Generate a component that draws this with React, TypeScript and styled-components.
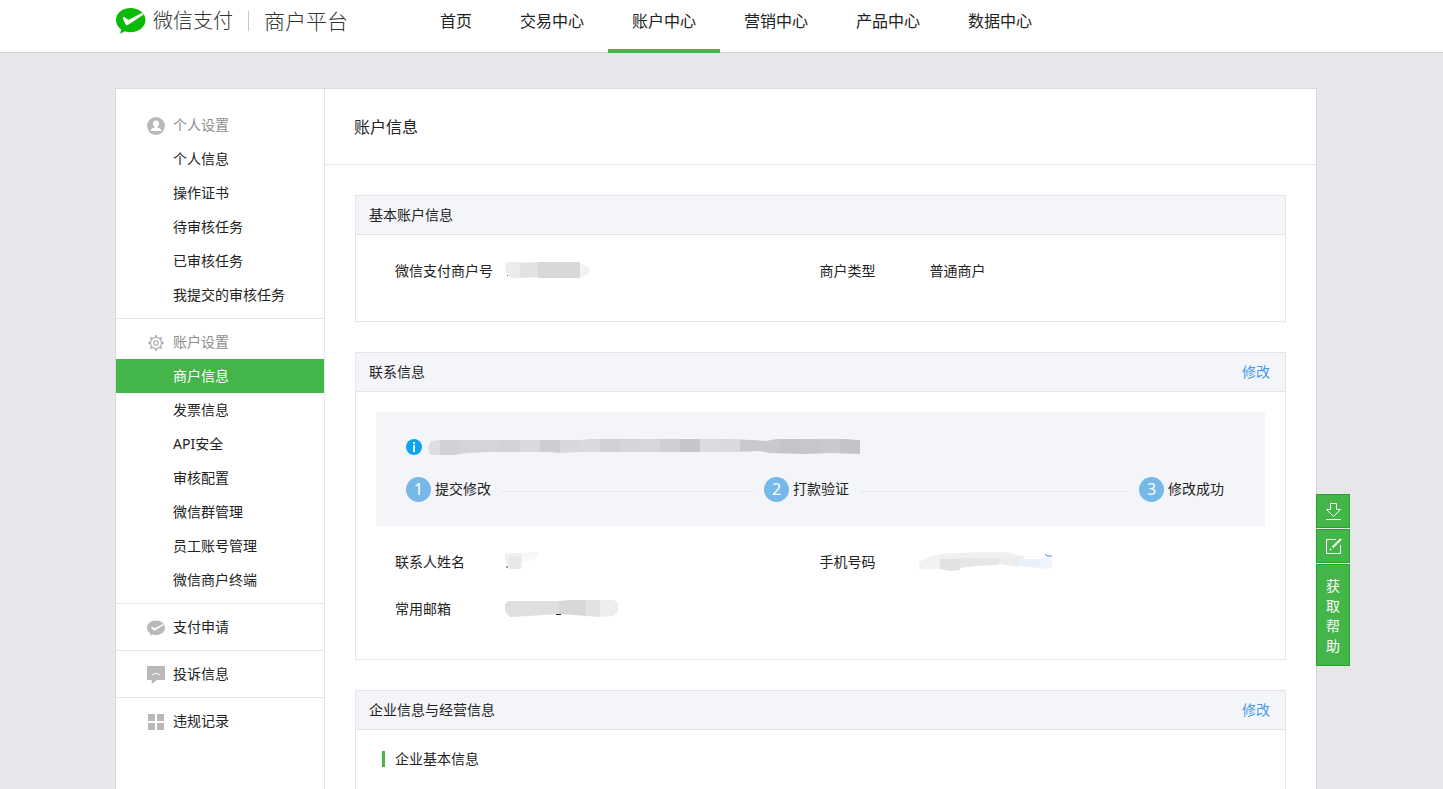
import React, { useState } from 'react';
import styled, { createGlobalStyle } from 'styled-components';

const GlobalStyle = createGlobalStyle`
  * { box-sizing: border-box; }
  body {
    margin: 0;
    background: #e7e7eb;
    color: #222;
    font: 14px/20px "Noto Sans", "Noto Sans CJK SC", sans-serif;
  }
  button { font: inherit; color: inherit; }
  a { color: inherit; text-decoration: none; }
  h1, h2, h3, ul, dl, dd, dt, ol { margin: 0; padding: 0; font-weight: 400; }
  ul, ol { list-style: none; }
`;

const line = '#e4e4e9';

const Page = styled.div`
  display: flex;
  flex-direction: column;
  min-height: 100vh;
`;

const Header = styled.header`
  height: 53px;
  padding-right: 11px;
  background: #fff;
  border-bottom: 1px solid #d2d2d7;
`;

const HeaderInner = styled.div`
  display: flex;
  width: 1202px;
  max-width: 100%;
  margin: 0 auto;
`;

const Brand = styled.a`
  display: flex;
  align-items: center;
  width: 301px;
  height: 42px;
  font-size: 20px;
  font-weight: 300;
  color: #333;
`;

const BrandName = styled.span`
  margin-left: 7px;
`;

const BrandRule = styled.span`
  width: 1px;
  height: 20px;
  margin: 0 15px;
  background: #c8c8c8;
`;

const BrandSite = styled.span`
  font-size: 21px;
`;

const Nav = styled.nav`
  display: flex;
`;

const NavLink = styled.a<{ $active?: boolean }>`
  height: 53px;
  padding: 0 24px;
  font-size: 16px;
  line-height: 43px;
  color: #222;
  border-bottom: 4px solid ${(p) => (p.$active ? '#44b549' : 'transparent')};
`;

const Main = styled.main`
  display: flex;
  flex: 1;
  flex-direction: column;
  padding: 35px 11px 0 0;
`;

const Frame = styled.div`
  position: relative;
  display: flex;
  flex: 1;
  width: 1202px;
  max-width: 100%;
  margin: 0 auto;
  background: #fff;
  border: 1px solid #d9dadc;
  border-bottom: 0;
`;

const Sidebar = styled.aside`
  flex: none;
  width: 209px;
  padding-top: 13px;
  border-right: 1px solid ${line};
`;

const MenuGroup = styled.section`
  padding: 6px 0;
  border-bottom: 1px solid ${line};
  &:last-child { border-bottom: 0; }
`;

const MenuHead = styled.h2<{ $muted?: boolean }>`
  display: flex;
  align-items: center;
  gap: 8px;
  height: 34px;
  padding-left: 31px;
  font-size: 14px;
  color: ${(p) => (p.$muted ? '#8d8d8d' : '#222')};
  svg { margin-top: 2px; }
`;

const MenuLink = styled.a<{ $active?: boolean }>`
  display: block;
  padding-left: 57px;
  line-height: 34px;
  color: ${(p) => (p.$active ? '#fff' : '#222')};
  background: ${(p) => (p.$active ? '#44b549' : 'transparent')};
`;

const Content = styled.div`
  flex: 1;
  display: flex;
  flex-direction: column;
  min-width: 0;
`;

const PageTitle = styled.h1`
  padding: 1px 29px 0;
  font-size: 16px;
  line-height: 74px;
  border-bottom: 1px solid ${line};
`;

const Panels = styled.div`
  display: flex;
  flex: 1;
  flex-direction: column;
  gap: 30px;
  padding: 30px 30px 0;
`;

const PanelBox = styled.section<{ $open?: boolean }>`
  flex: ${(p) => (p.$open ? '1' : 'none')};
  border: 1px solid ${line};
  border-bottom-width: ${(p) => (p.$open ? '0' : '1px')};
`;

const PanelHead = styled.div`
  display: flex;
  justify-content: space-between;
  padding: 0 15px 0 13px;
  line-height: 38px;
  background: #f4f5f9;
  border-bottom: 1px solid ${line};
`;

const PanelTitle = styled.h2`
  font-size: 14px;
`;

const EditLink = styled.a`
  color: #459ae9;
`;

const Fields = styled.dl`
  display: grid;
  grid-template-columns: 1fr 1fr;
  padding: 12px 41px 27px 39px;
`;

const Field = styled.div`
  display: flex;
  align-items: center;
  height: 47px;
`;

const FieldName = styled.dt`
  width: 110px;
`;

const FieldValue = styled.dd`
  display: flex;
`;

const Smudge = styled.svg<{ $pull?: boolean }>`
  display: block;
  margin-left: ${(p) => (p.$pull ? '-11px' : '0')};
`;

const Notice = styled.div`
  margin: 20px 20px 0;
  padding: 24px 41px 15px 30px;
  background: #f4f5f9;
`;

const NoticeText = styled.div`
  display: flex;
  align-items: center;
  gap: 6px;
  height: 22px;
`;

const Steps = styled.ol`
  display: flex;
  align-items: center;
  height: 44px;
  margin-top: 9px;
`;

const Step = styled.li`
  display: flex;
  align-items: center;
  gap: 4px;
`;

const StepNumber = styled.span`
  width: 25px;
  height: 25px;
  font-size: 16px;
  line-height: 25px;
  text-align: center;
  color: #fff;
  background: #76b8e8;
  border-radius: 50%;
`;

const StepLine = styled.li<{ $grow: number }>`
  flex: ${(p) => p.$grow};
  height: 1px;
  margin: 4px 11px 0;
  background: #e4e5ea;
`;

const SubTitle = styled.h3`
  display: flex;
  align-items: center;
  gap: 10px;
  padding: 19px 26px;
  font-size: 14px;
  &::before {
    content: '';
    width: 3px;
    height: 16px;
    background: #44b549;
  }
`;

const Tools = styled.div`
  position: absolute;
  top: 405px;
  left: 100%;
  display: flex;
  flex-direction: column;
  gap: 1px;
  width: 34px;
`;

const ToolButton = styled.button`
  display: flex;
  align-items: center;
  justify-content: center;
  min-height: 34px;
  padding: 0;
  color: #fff;
  background: #44b549;
  border: 1px solid #2aa02f;
  cursor: pointer;
`;

const HelpButton = styled(ToolButton)`
  padding: 11px 9px 9px;
`;

function BrandMark() {
  return (
    <svg width="31" height="28" viewBox="0 0 31 28" aria-hidden="true">
      <path
        fill="#09bb07"
        d="M15.5 1C7.2 1 1 6.3 1 13c0 3.900 2 7.200 5.100 9.400L5.300 26.800l4.500-2.500c1.800.6 3.700.9 5.700.9 8.300 0 15-5.400 15-12.200S23.800 1 15.500 1z"
      />
      <path
        fill="#fff"
        d="M8 10.300c.7-.5 1.300-.4 2 .1l2.800 2c.6.4 1 .4 1.600.1L27.200 5.800l1.200 2-15.600 10.300c-.9.5-1.600.3-2.100-.6L7.700 11.300c-.2-.4-.1-.8.3-1z"
      />
    </svg>
  );
}

function UserIcon() {
  return (
    <svg width="18" height="18" viewBox="0 0 18 18" aria-hidden="true">
      <circle cx="9" cy="9" r="9" fill="#b9b9b9" />
      <path
        fill="#fff"
        d="M9 3.500c-1.900 0-3 1.300-3 3.100 0 1.300.6 2.400 1.500 3v1L4.700 11.800c-.5.2-.7.500-.7 1V14h10v-1.200c0-.5-.2-.8-.7-1l-2.800-1.200v-1c.9-.6 1.500-1.700 1.500-3 0-1.800-1.100-3.100-3-3.100z"
      />
    </svg>
  );
}

function GearIcon() {
  return (
    <svg width="18" height="18" viewBox="0 0 18 18" fill="none" stroke="#b4b4b4" strokeWidth="1.300" aria-hidden="true">
      <circle cx="9" cy="9" r="5.600" />
      <circle cx="9" cy="9" r="2.300" />
      {[0, 45, 90, 135, 180, 225, 270, 315].map((a) => (
        <path key={a} d="M9 3.400V1.200" strokeWidth="2.200" transform={`rotate(${a} 9 9)`} />
      ))}
    </svg>
  );
}

function PayIcon() {
  return (
    <svg width="18" height="18" viewBox="0 0 18 18" aria-hidden="true">
      <path fill="#b9b9b9" d="M9 1.500c-5 0-9 3.200-9 7.300 0 2.300 1.200 4.300 3.200 5.600l-.4 2.300 2.600-1.200c1.100.4 2.300.6 3.600.6 5 0 9-3.200 9-7.300s-4-7.300-9-7.300z" />
      <path fill="#fff" d="M4.200 8c.4-.3.8-.2 1.200 0l1.700 1c.3.200.6.200.9 0l8.300-4 .4.900-8.900 5.700c-.5.3-1 .2-1.300-.3L4.100 8.700c-.1-.3-.1-.5.1-.7z" />
    </svg>
  );
}

function ComplaintIcon() {
  return (
    <svg width="18" height="18" viewBox="0 0 18 18" aria-hidden="true">
      <path fill="#b9b9b9" d="M0 0h18v14h-8l-5.300 4v-4H0z" />
      <path fill="none" stroke="#fff" strokeWidth="1.200" d="M5.500 9c1.800-2 5.200-2 7 0" />
    </svg>
  );
}

function RecordIcon() {
  return (
    <svg width="18" height="18" viewBox="0 0 18 18" fill="#b9b9b9" aria-hidden="true">
      <path d="M1 1h7v7H1zM10 1h7v7h-7zM1 10h7v7H1zM10 10h7v7h-7z" />
    </svg>
  );
}

function InfoIcon() {
  return (
    <svg width="16" height="16" viewBox="0 0 16 16" aria-hidden="true">
      <circle cx="8" cy="8" r="8" fill="#0aa5ec" />
      <path fill="#fff" d="M7 3h2v2H7zM7 6h2v7H7z" />
    </svg>
  );
}

function DownloadIcon() {
  return (
    <svg width="18" height="20" viewBox="0 0 18 20" fill="none" stroke="#fff" aria-hidden="true">
      <path d="M6.500 2.500h6v6h4L9.500 15.500l-7-7h4zM2 18.500h15" />
    </svg>
  );
}

function EditIcon() {
  return (
    <svg width="18" height="18" viewBox="0 0 18 18" fill="none" stroke="#fff" aria-hidden="true">
      <path d="M12 2.500H2.500v14h14V8" />
      <path strokeWidth="2" d="m8.500 10.500 8.500-8.500" />
      <path d="m6 13 1.200-1.200" strokeWidth="1.500" />
    </svg>
  );
}

const noticeTones = [
  '#dddee2', '#d0d1d4', '#d4d5d8', '#d4d5d8', '#d2d3d6', '#d8d9dc', '#cdced1', '#d7d8db', '#d9dadd', '#d0d1d5', '#d5d6d9',
  '#d8d8dc', '#cfcfd3', '#c6c6ca', '#dcdce0', '#dadade', '#c8c9cc', '#c9cacd', '#c4c5c9', '#c6c7ca', '#c9cacd', '#c3c4c8',
];

function NoticeSmudge() {
  return (
    <Smudge width="433" height="18" viewBox="0 0 433 18" aria-hidden="true">
      <clipPath id="notice-shape">
        <path d="M0 10l3-7 9-1h140l10-1h140l22 1 14 1 10-2h70l10 1 14 0v14h-10l-30-1-25 1-35-1-10-2-30 1H150l-15 1-15-1H60l-20 1-15 2H2z" />
      </clipPath>
      <g clipPath="url(#notice-shape)">
        {noticeTones.map((tone, i) => (
          <rect key={i} x={i * 20 - 8} width="20" height="18" fill={tone} />
        ))}
      </g>
    </Smudge>
  );
}

function MerchantSmudge() {
  return (
    <Smudge width="86" height="18" viewBox="0 0 86 18" aria-hidden="true">
      <path fill="#ececec" d="M0 1l4-1h14v16H6l-5-5z" />
      <path fill="#e2e2e2" d="M15 1l18-1v15l-18 1z" />
      <path fill="#d8d8d8" d="M33 0h42v16H33z" />
      <path fill="#f2f2f2" d="M75 2l8 2 2 5-2 4-8 2z" />
      <path fill="#777" d="M2 13h1v1H2z" />
    </Smudge>
  );
}

function NameSmudge() {
  return (
    <Smudge width="40" height="20" viewBox="0 0 40 20" aria-hidden="true">
      <path fill="#f0f0f0" d="M-2 3l6-2h13v15H4z" />
      <path fill="#e8e8e8" d="M4 4h12v13H4z" />
      <path fill="#f8f8f8" d="M17 1l18-2-3 7-15 4z" />
      <path fill="#333" d="M1 15l2-1v1l-2 1z" />
    </Smudge>
  );
}

function PhoneSmudge() {
  return (
    <Smudge $pull width="136" height="24" viewBox="0 0 136 24" aria-hidden="true">
      <path fill="#f2f2f2" d="M0 12l10-5 11-3v15H0z" />
      <path fill="#f0f0f0" d="M20 4l40-2h25l20 4v6H20z" />
      <path fill="#e1e1e1" d="M21 9h20v11l-10 1-10-2z" />
      <path fill="#e6e6e6" d="M41 8h39v7l-24 1-15 2z" />
      <path fill="#ececec" d="M80 8h20v9l-20-3z" />
      <path fill="#e8f0fa" d="M99 9h22v9l-22-2z" />
      <path fill="#edf4fc" d="M121 8h12v10l-12 1z" />
      <path fill="none" stroke="#4a90d0" d="M126 4l2 2h5" />
    </Smudge>
  );
}

function MailSmudge() {
  return (
    <Smudge width="113" height="18" viewBox="0 0 113 18" aria-hidden="true">
      <path fill="#dfdfdf" d="M0 4l3-3 51 0v13l-30 2-19 1-5-6z" />
      <path fill="#d8d8d8" d="M54 1l10-1h18v16l-28-2z" />
      <path fill="#e2e2e2" d="M81 0h14v17l-14-1z" />
      <path fill="#ededed" d="M95 0h14l4 3v9l-5 4-13 1z" />
      <path fill="#222" d="M51 14h5v1h-5z" />
    </Smudge>
  );
}

const navItems = ['首页', '交易中心', '账户中心', '营销中心', '产品中心', '数据中心'];

const menu = [
  { head: '个人设置', icon: <UserIcon />, items: ['个人信息', '操作证书', '待审核任务', '已审核任务', '我提交的审核任务'] },
  {
    head: '账户设置',
    icon: <GearIcon />,
    items: ['商户信息', '发票信息', 'API安全', '审核配置', '微信群管理', '员工账号管理', '微信商户终端'],
  },
  { head: '支付申请', icon: <PayIcon />, items: [] },
  { head: '投诉信息', icon: <ComplaintIcon />, items: [] },
  { head: '违规记录', icon: <RecordIcon />, items: [] },
];

function Panel(props: { title: string; editable?: boolean; open?: boolean; children: React.ReactNode }) {
  return (
    <PanelBox $open={props.open}>
      <PanelHead>
        <PanelTitle>{props.title}</PanelTitle>
        {props.editable && <EditLink href="#edit">修改</EditLink>}
      </PanelHead>
      {props.children}
    </PanelBox>
  );
}

function Item(props: { name: string; children: React.ReactNode }) {
  return (
    <Field>
      <FieldName>{props.name}</FieldName>
      <FieldValue>{props.children}</FieldValue>
    </Field>
  );
}

export default function App() {
  const [section, setSection] = useState('账户中心');
  const [entry, setEntry] = useState('商户信息');

  return (
    <Page>
      <GlobalStyle />
      <Header>
        <HeaderInner>
          <Brand href="#home">
            <BrandMark />
            <BrandName>微信支付</BrandName>
            <BrandRule />
            <BrandSite>商户平台</BrandSite>
          </Brand>
          <Nav>
            {navItems.map((name) => (
              <NavLink key={name} href="#nav" $active={name === section} onClick={() => setSection(name)}>
                {name}
              </NavLink>
            ))}
          </Nav>
        </HeaderInner>
      </Header>
      <Main>
        <Frame>
          <Sidebar>
            {menu.map((group) => (
              <MenuGroup key={group.head}>
                <MenuHead $muted={group.items.length > 0}>
                  {group.icon}
                  {group.items.length > 0 ? group.head : <a href="#menu">{group.head}</a>}
                </MenuHead>
                {group.items.length > 0 && (
                  <ul>
                    {group.items.map((name) => (
                      <li key={name}>
                        <MenuLink href="#menu" $active={name === entry} onClick={() => setEntry(name)}>
                          {name}
                        </MenuLink>
                      </li>
                    ))}
                  </ul>
                )}
              </MenuGroup>
            ))}
          </Sidebar>
          <Content>
            <PageTitle>账户信息</PageTitle>
            <Panels>
              <Panel title="基本账户信息">
                <Fields>
                  <Item name="微信支付商户号">
                    <MerchantSmudge />
                  </Item>
                  <Item name="商户类型">普通商户</Item>
                </Fields>
              </Panel>
              <Panel title="联系信息" editable>
                <Notice>
                  <NoticeText>
                    <InfoIcon />
                    <NoticeSmudge />
                  </NoticeText>
                  <Steps>
                    <Step>
                      <StepNumber>1</StepNumber>提交修改
                    </Step>
                    <StepLine $grow={250} role="presentation" />
                    <Step>
                      <StepNumber>2</StepNumber>打款验证
                    </Step>
                    <StepLine $grow={267} role="presentation" />
                    <Step>
                      <StepNumber>3</StepNumber>修改成功
                    </Step>
                  </Steps>
                </Notice>
                <Fields>
                  <Item name="联系人姓名">
                    <NameSmudge />
                  </Item>
                  <Item name="手机号码">
                    <PhoneSmudge />
                  </Item>
                  <Item name="常用邮箱">
                    <MailSmudge />
                  </Item>
                </Fields>
              </Panel>
              <Panel title="企业信息与经营信息" editable open>
                <SubTitle>企业基本信息</SubTitle>
              </Panel>
            </Panels>
          </Content>
          <Tools>
            <ToolButton type="button" aria-label="下载">
              <DownloadIcon />
            </ToolButton>
            <ToolButton type="button" aria-label="反馈">
              <EditIcon />
            </ToolButton>
            <HelpButton type="button">获取帮助</HelpButton>
          </Tools>
        </Frame>
      </Main>
    </Page>
  );
}
